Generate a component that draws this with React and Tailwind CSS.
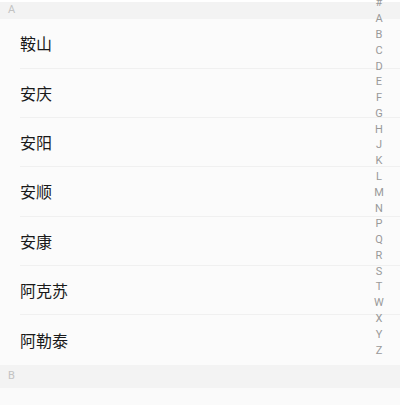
import React from "react";

const cities = ["鞍山", "安庆", "安阳", "安顺", "安康", "阿克苏", "阿勒泰"];
const letters = ["#", "A", "B", "C", "D", "E", "F", "G", "H", "J", "K", "L", "M", "N", "P", "Q", "R", "S", "T", "W", "X", "Y", "Z"];

export default function App() {
  return (
    <div
      className="relative w-[400px] h-[405px] overflow-hidden bg-[#fafafa]"
      style={{ fontFamily: '"Noto Sans CJK SC", "Noto Sans", sans-serif' }}
    >
      <div className="h-[2px] bg-white" />
      <div
        className="h-[17.3px] bg-[#f3f3f3] flex items-center pl-[8px] text-[11px] text-[#c2c2c2]"
        style={{ fontFamily: '"Roboto", "Liberation Sans", sans-serif' }}
      >
        A
      </div>
      <div className="flex flex-col">
        {cities.map((c, i) => (
          <div key={c} className="h-[49.33px] flex flex-col bg-[#fbfbfb]">
            <div className="flex-1 flex items-center pl-[20px] text-[16px] text-[#1a1a1a]">{c}</div>
            {i < cities.length - 1 && <div className="ml-[20px] h-px bg-[#f0f0f0]" />}
          </div>
        ))}
      </div>
      <div
        className="h-[23.4px] bg-[#f3f3f3] flex items-center pl-[8px] text-[11px] text-[#c2c2c2]"
        style={{ fontFamily: '"Roboto", "Liberation Sans", sans-serif' }}
      >
        B
      </div>
      <div className="absolute right-[10px] top-[-4.6px] w-[22px] flex flex-col items-center">
        {letters.map((l) => (
          <div
            key={l}
            className="h-[15.79px] leading-[15.79px] text-[11px] text-[#999999]"
            style={{ fontFamily: '"Roboto", "Liberation Sans", sans-serif' }}
          >
            {l}
          </div>
        ))}
      </div>
    </div>
  );
}
